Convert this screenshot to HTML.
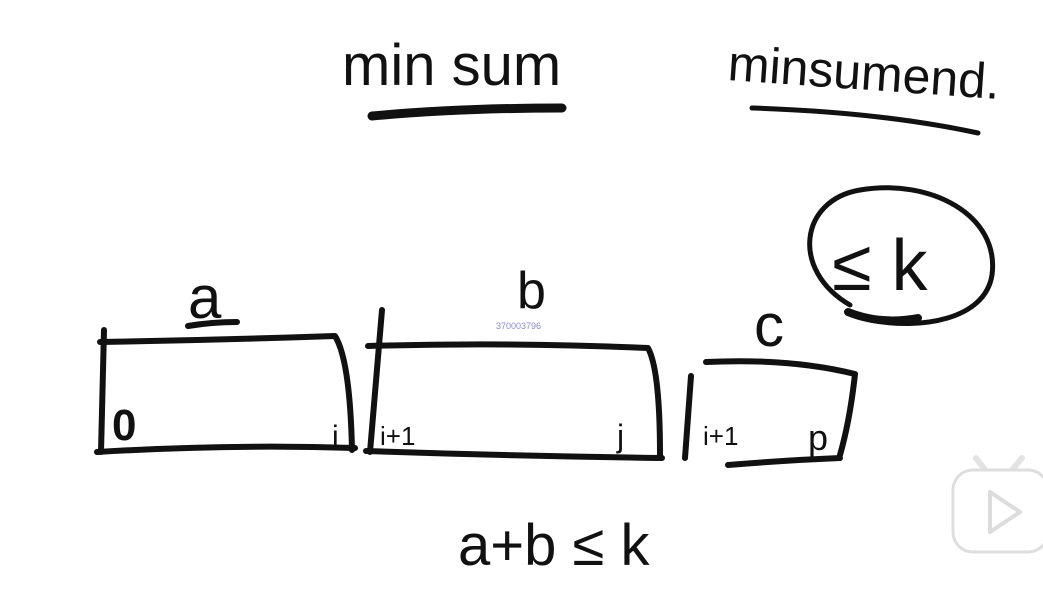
<!DOCTYPE html>
<html><head><meta charset="utf-8"><style>
html,body{margin:0;padding:0;background:#fff;width:1043px;height:613px;overflow:hidden}
svg{display:block}
text{font-family:"Liberation Sans",sans-serif;fill:#111}
</style></head><body>
<svg width="1043" height="613" viewBox="0 0 1043 613" xmlns="http://www.w3.org/2000/svg">
<g fill="none" stroke="#111" stroke-linecap="round" stroke-linejoin="round">
<path d="M372 116 Q460 108 562 108" stroke-width="9"/>
<path d="M752 108 Q880 112 978 133" stroke-width="5"/>
<path d="M850 305 C790 270 800 200 860 190 C930 178 1000 215 992 275 C985 320 920 330 870 320" stroke-width="5"/>
<path d="M848 312 Q880 325 918 318" stroke-width="8"/>
<path d="M188 326 Q212 322 237 322" stroke-width="6"/>
<path d="M104 330 L101 452" stroke-width="6"/>
<path d="M100 342 Q220 340 335 336 Q350 360 352 450" stroke-width="6"/>
<path d="M97 452 Q230 444 355 448" stroke-width="6"/>
<path d="M382 310 L370 452" stroke-width="6"/>
<path d="M368 346 Q510 342 648 348 Q660 370 660 455" stroke-width="6"/>
<path d="M366 451 Q510 456 662 458" stroke-width="6"/>
<path d="M691 376 L685 458" stroke-width="6"/>
<path d="M706 362 Q790 358 855 374 Q850 420 840 455" stroke-width="6"/>
<path d="M728 465 Q790 460 840 458" stroke-width="6"/>
</g>
<text x="342" y="85" font-size="58">min sum</text>
<text x="727" y="80" font-size="50" transform="rotate(4 727 80)">minsumend.</text>
<text x="832" y="290" font-size="72">≤ k</text>
<text x="188" y="318" font-size="60">a</text>
<text x="517" y="308" font-size="52">b</text>
<text x="754" y="346" font-size="60">c</text>
<text x="112" y="440" font-size="44" font-weight="bold">0</text>
<text x="332" y="446" font-size="30">i</text>
<text x="380" y="445" font-size="26">i+1</text>
<text x="617" y="447" font-size="32">j</text>
<text x="703" y="445" font-size="26">i+1</text>
<text x="808" y="450" font-size="36">p</text>
<text x="458" y="565" font-size="58">a+b ≤ k</text>
<text x="496" y="329" font-size="9" style="fill:#8a8ad0">370003796</text>
<g>
<path d="M985 470 L976 458 M1012 470 L1022 458" stroke="#e3e3e3" stroke-width="6" stroke-linecap="round"/>
<rect x="953" y="470" width="95" height="82" rx="20" fill="#fff" stroke="#dedede" stroke-width="3"/>
<path d="M990 492 L1020 512 L990 532 Z" fill="#fff" stroke="#dcdcdc" stroke-width="4" stroke-linejoin="round"/>
</g>
</svg>
</body></html>
